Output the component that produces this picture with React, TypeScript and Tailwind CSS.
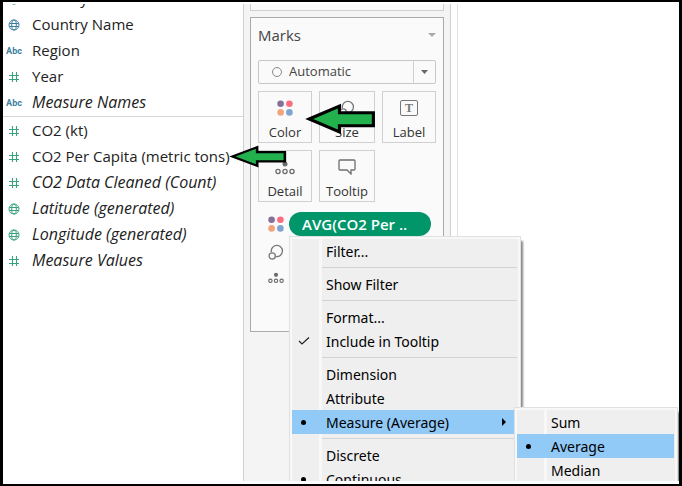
import type { ReactNode } from "react";

const fieldFont = "font-['Open_Sans',sans-serif]";
const menuFont = "font-['Noto_Sans',sans-serif]";

function Globe() {
  return (
    <svg className="size-3" viewBox="0 0 12 12" fill="none" stroke="currentColor" aria-hidden="true">
      <circle cx="6" cy="6" r="5" />
      <ellipse cx="6" cy="6" rx="2.3" ry="5" />
      <path d="M1.5 4.500h9M1.500 7.500h9" />
    </svg>
  );
}

function Hash() {
  return (
    <svg className="size-3" viewBox="0 0 12 12" fill="none" stroke="currentColor" aria-hidden="true">
      <path d="M4.5 1v10M8.5 1v10M1 4.5h10M1 8.5h10" strokeWidth="1.1" />
    </svg>
  );
}

function Abc() {
  return <span className="pt-px font-['Roboto',sans-serif] text-[9px] font-bold">Abc</span>;
}

type Kind = "globe" | "hash" | "abc";

function Field({ kind, color, italic, children }: { kind: Kind; color: "blue" | "green"; italic?: boolean; children: ReactNode }) {
  return (
    <li className="flex h-[26px] items-center">
      <span className={`flex w-[22px] justify-center ${color === "blue" ? "text-[#3d7f9f]" : "text-[#3aa37c]"}`}>
        {kind === "globe" ? <Globe /> : kind === "hash" ? <Hash /> : <Abc />}
      </span>
      <span className={`pb-[2px] pl-[7px] whitespace-nowrap ${italic ? "text-base italic" : "text-[15px]"}`}>{children}</span>
    </li>
  );
}

function ColorDots() {
  return (
    <svg className="size-4" viewBox="0 0 16 16" aria-hidden="true">
      <circle cx="3.6" cy="3.8" r="3.3" fill="#866f99" />
      <circle cx="12.4" cy="3.8" r="3.3" fill="#fb6e80" />
      <circle cx="3.6" cy="12.4" r="3.3" fill="#f2a47a" />
      <circle cx="12.4" cy="12.4" r="3.3" fill="#7fa5cf" />
    </svg>
  );
}

function SizeIcon() {
  return (
    <svg className="size-4" viewBox="0 0 16 16" fill="none" stroke="#777" strokeWidth="1.3" aria-hidden="true">
      <path d="M3.4 8.2A5.6 5.6 0 1 1 7.8 12.5" />
      <circle cx="4.2" cy="12" r="3.1" />
    </svg>
  );
}

function DetailIcon() {
  return (
    <svg className="h-4 w-5" viewBox="0 0 20 16" fill="none" stroke="#6b6b6b" strokeWidth="1.3" aria-hidden="true">
      <circle cx="10" cy="5" r="2.5" fill="#6b6b6b" stroke="none" />
      <circle cx="3" cy="12.5" r="2.1" />
      <circle cx="10" cy="12.5" r="2.1" />
      <circle cx="17" cy="12.5" r="2.1" />
    </svg>
  );
}

function LabelIcon() {
  return (
    <span className="flex h-4 w-[18px] items-center justify-center rounded-xs border border-[#777] font-['Liberation_Serif',serif] text-xs font-bold text-[#777]">
      T
    </span>
  );
}

function TooltipIcon() {
  return (
    <svg className="h-4 w-[18px]" viewBox="0 0 18 16" fill="none" stroke="#6f6f6f" strokeWidth="1.3" aria-hidden="true">
      <path d="M2 1h14q1 0 1 1v8q0 1-1 1h-3v4l-4-4H2q-1 0-1-1V2q0-1 1-1z" />
    </svg>
  );
}

function MarkButton({ icon, children }: { icon: ReactNode; children: ReactNode }) {
  return (
    <button className="flex h-[52px] flex-col items-center border border-[#d0d0d0] pt-2 text-[13px] leading-5 text-[#333]">
      <span className="flex h-[22px] items-start">{icon}</span>
      {children}
    </button>
  );
}

function MenuItem({ mark, active, arrow, children }: { mark?: "dot" | "check"; active?: boolean; arrow?: boolean; children: ReactNode }) {
  return (
    <li>
      <button className={`flex h-6 w-full items-center text-left ${active ? "bg-[#91c9f7]" : ""}`}>
        <span className="flex w-[27px] shrink-0 items-center justify-center pr-1">
          {mark === "dot" && <span className="size-[5px] rounded-full bg-black" />}
          {mark === "check" && (
            <svg className="h-2 w-3" viewBox="0 0 12 8" fill="none" stroke="#222" strokeWidth="1.2" aria-hidden="true">
              <path d="M1 4l3 3 7-6.5" />
            </svg>
          )}
        </span>
        <span className="grow pt-[2px] pl-[7px] whitespace-nowrap">{children}</span>
        {arrow && (
          <svg className="mr-3 h-2 w-1" viewBox="0 0 4 8" aria-hidden="true">
            <path d="M0 0l4 4-4 4z" />
          </svg>
        )}
      </button>
    </li>
  );
}

function Separator() {
  return <li role="separator" className="mr-px ml-[30px] flex h-[9px] items-center"><span className="h-px w-full bg-[#d3d3d3]" /></li>;
}

const menuBox = `absolute border border-[#e0e0e0] bg-[#f8f8f8] p-[2px] text-sm leading-5 text-black shadow-[3px_4px_2px_-1px_#888] ${menuFont}`;
const menuList = "bg-[linear-gradient(to_right,#efefef_27px,#f8f8f8_27px,#f8f8f8_30px,#efefef_30px)]";

function SubMenu() {
  return (
    <div className={`${menuBox} top-[170px] left-[224px] z-10 w-[164px]`}>
      <ul className={`pr-px ${menuList}`}>
        <MenuItem>Sum</MenuItem>
        <MenuItem mark="dot" active>Average</MenuItem>
        <MenuItem>Median</MenuItem>
      </ul>
    </div>
  );
}

function ContextMenu() {
  return (
    <div className={`${menuBox} top-full left-0 w-[232px]`}>
      <ul className={menuList}>
        <MenuItem>Filter...</MenuItem>
        <Separator />
        <MenuItem>Show Filter</MenuItem>
        <Separator />
        <MenuItem>Format...</MenuItem>
        <MenuItem mark="check">Include in Tooltip</MenuItem>
        <Separator />
        <MenuItem>Dimension</MenuItem>
        <MenuItem>Attribute</MenuItem>
        <MenuItem mark="dot" active arrow>Measure (Average)</MenuItem>
        <Separator />
        <MenuItem>Discrete</MenuItem>
        <MenuItem mark="dot">Continuous</MenuItem>
      </ul>
      <SubMenu />
    </div>
  );
}

function MarksCard() {
  return (
    <section className="mt-[6px] h-[315px] border border-[#aaa] bg-[#fafafa] px-[7px]">
      <header className="flex h-[42px] items-center justify-between text-[15px] text-[#444]">
        <h2 className="pb-[7px]">Marks</h2>
        <svg className="mb-2 h-1 w-2" viewBox="0 0 8 4" aria-hidden="true"><path d="M0 0h8L4 4z" fill="#aaa" /></svg>
      </header>
      <label className="flex h-6 items-center rounded-xs border border-[#c8c8c8]">
        <span className="ml-[13px] size-[10px] shrink-0 rounded-full border border-[#888]" />
        <select aria-label="Mark type" className="h-full min-w-0 grow appearance-none pl-[7px] text-[13px] text-[#444]">
          <option>Automatic</option>
        </select>
        <span className="flex h-full w-[22px] items-center justify-center border-l border-[#d0d0d0]">
          <svg className="h-1 w-[7px]" viewBox="0 0 7 4" aria-hidden="true"><path d="M0 0h7L3.5 4z" fill="#666" /></svg>
        </span>
      </label>
      <div className="mt-[7px] grid grid-cols-[54fr_56fr_54fr] gap-[7px]">
        <MarkButton icon={<ColorDots />}>Color</MarkButton>
        <MarkButton icon={<SizeIcon />}>Size</MarkButton>
        <MarkButton icon={<LabelIcon />}>Label</MarkButton>
        <MarkButton icon={<DetailIcon />}>Detail</MarkButton>
        <MarkButton icon={<TooltipIcon />}>Tooltip</MarkButton>
      </div>
      <div className="mt-[10px] flex gap-[5px] pl-[10px]">
        <div className="flex w-[16px] shrink-0 flex-col items-center gap-3 pt-1">
          <ColorDots />
          <SizeIcon />
          <svg className="h-3 w-4" viewBox="0 0 20 14" fill="none" stroke="#6b6b6b" strokeWidth="1.4" aria-hidden="true">
            <circle cx="10" cy="3" r="2.6" fill="#6b6b6b" stroke="none" />
            <circle cx="3" cy="10.5" r="2.1" />
            <circle cx="10" cy="10.5" r="2.1" />
            <circle cx="17" cy="10.5" r="2.1" />
          </svg>
        </div>
        <div className="relative w-[142px] self-start">
          <button className="block h-6 w-full rounded-full bg-[#00966a] pl-[13px] text-left text-[15px] font-semibold whitespace-nowrap text-white">
            AVG(CO2 Per ..
          </button>
          <ContextMenu />
        </div>
      </div>
    </section>
  );
}

function Arrow({ className }: { className: string }) {
  return (
    <svg className={className} viewBox="0 0 68 31" preserveAspectRatio="none" fill="#22b14c" stroke="#000" strokeWidth="3" aria-hidden="true">
      <path d="M4 15.5L33 3v6.500H65.500v12.500H33V28z" />
    </svg>
  );
}

export default function App() {
  return (
    <div className={`h-screen border-x-[3px] border-y-2 border-black bg-white pt-[2px] pb-[3px] text-[#222] ${fieldFont}`}>
      <main className="relative flex h-full overflow-hidden">
        <aside className="w-[241px] shrink-0 border-r border-[#d0d0d0]">
          <ul className="-mt-[18px] border-b border-[#d8d8d8]">
            <Field kind="globe" color="blue">Country</Field>
            <Field kind="globe" color="blue">Country Name</Field>
            <Field kind="abc" color="blue">Region</Field>
            <Field kind="hash" color="green">Year</Field>
            <Field kind="abc" color="blue" italic>Measure Names</Field>
          </ul>
          <ul className="mt-[1px]">
            <Field kind="hash" color="green">CO2 (kt)</Field>
            <Field kind="hash" color="green">CO2 Per Capita (metric tons)</Field>
            <Field kind="hash" color="green" italic>CO2 Data Cleaned (Count)</Field>
            <Field kind="globe" color="green" italic>Latitude (generated)</Field>
            <Field kind="globe" color="green" italic>Longitude (generated)</Field>
            <Field kind="hash" color="green" italic>Measure Values</Field>
          </ul>
        </aside>
        <div className="w-[207px] shrink-0 border-r border-[#d0d0d0] bg-[#f4f4f4] px-[6px]">
          <div className="h-[7px] border border-t-0 border-[#d0d0d0] bg-[#fafafa]" />
          <MarksCard />
        </div>
        <div className="ml-[6px] grow border-l border-[#e0e0e0]" />
        <Arrow className="absolute top-[99px] left-[302px] h-[32px] w-[71px]" />
        <Arrow className="absolute top-[141px] left-[226px] h-[23px] w-[58px]" />
      </main>
    </div>
  );
}
